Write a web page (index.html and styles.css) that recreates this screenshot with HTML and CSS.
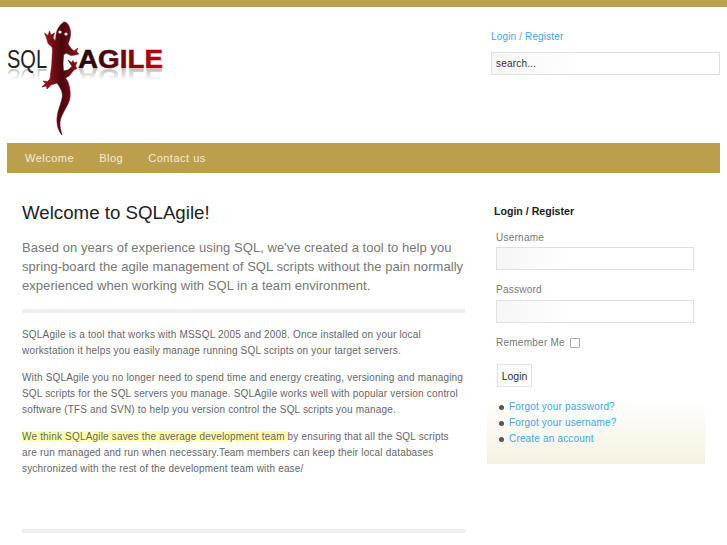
FILE: index.html
```html
<!DOCTYPE html>
<html lang="en">
<head>
<meta charset="utf-8">
<title>SQLAgile</title>
<link rel="stylesheet" href="styles.css">
</head>
<body>
<div class="topbar"></div>
<div class="wrap">
  <header class="header">
    <svg class="logo" width="170" height="120" viewBox="0 20 170 120" role="img" aria-label="SQL Agile">
      <defs>
        <linearGradient id="ag" gradientUnits="userSpaceOnUse" x1="78" y1="0" x2="163" y2="0">
          <stop offset="0" stop-color="#1a0508"/>
          <stop offset="0.4" stop-color="#5a0612"/>
          <stop offset="1" stop-color="#c8040f"/>
        </linearGradient>
        <linearGradient id="liz" gradientUnits="userSpaceOnUse" x1="48" y1="0" x2="78" y2="0">
          <stop offset="0" stop-color="#8f111b"/>
          <stop offset="0.45" stop-color="#4a060e"/>
          <stop offset="1" stop-color="#8a101a"/>
        </linearGradient>
        <linearGradient id="fade" gradientUnits="userSpaceOnUse" x1="0" y1="68" x2="0" y2="80">
          <stop offset="0" stop-color="#fff" stop-opacity="0.5"/>
          <stop offset="1" stop-color="#fff" stop-opacity="0"/>
        </linearGradient>
        <mask id="rm"><rect x="0" y="68" width="170" height="14" fill="url(#fade)"/></mask>
      </defs>
      <g mask="url(#rm)" fill="#777">
        <text class="logo-sql" transform="translate(0 137) scale(1 -1)" x="7" y="68" textLength="40" lengthAdjust="spacingAndGlyphs">SQL</text>
        <text class="logo-agile" transform="translate(0 137) scale(1 -1)" x="78" y="68" textLength="85" lengthAdjust="spacingAndGlyphs">AGILE</text>
      </g>
      <text class="logo-sql" x="7" y="68" fill="#222" textLength="40" lengthAdjust="spacingAndGlyphs">SQL</text>
      <text class="logo-agile" x="78" y="68" fill="url(#ag)" stroke="url(#ag)" stroke-width="0.5" textLength="85" lengthAdjust="spacingAndGlyphs">AGILE</text>
      <path fill="url(#liz)" stroke="url(#liz)" stroke-width="0.6" stroke-linejoin="round" d="M65 22 C68 23 70 27 70.500 32 C71 37 69 41 68 44 L71.500 49 L74 51 L78 48 L76.500 51.500 L79 54 L75 55 L71 55.500 L66 53 L63.500 55 L63 64 L63.500 71 L68 70 L72 66.500 L68 60 L71.500 62.500 L73 60.500 L74 63 L77 62 L75.500 66 L77 68.500 L74 70 L69 76 L65.500 78 L68 82 C70 88 71 94 69.500 100 C67 108 61 114 60 122 C59.500 127 61 131 62 135 C58.500 131 56.500 125 57 118 C57.500 110 62 102 62.500 96 C62.500 90 59 86 57 83 L51 85 L47 89 L46.500 86 L42 87 L45.500 83.500 L43 81 L47.500 81.500 L50 79 C50.500 72 52 66 52 60 C52 54 53 50 52 47 L48 43.500 L46.500 38 L44.500 33 L48 35.500 L49.500 31 L51 35 L54.500 33 L53 38 L55.500 41 C56 36 56 31 59 27 C61 24 63 22 65 22 Z"/>
      <circle cx="60" cy="32" r="1.600" fill="#fff"/>
      <circle cx="66" cy="34" r="1.600" fill="#fff"/>
    </svg>
    <div class="header-side">
      <div class="login-link"><a href="#">Login</a> / <a href="#">Register</a></div>
      <input class="search" type="text" value="search...">
    </div>
  </header>
  <nav class="nav">
    <a href="#">Welcome</a>
    <a href="#">Blog</a>
    <a href="#">Contact us</a>
  </nav>
  <div class="content">
    <main class="main">
      <h1>Welcome to SQLAgile!</h1>
      <p class="lead">Based on years of experience using SQL, we've created a tool to help you spring-board the agile management of SQL scripts without the pain normally experienced when working with SQL in a team environment.</p>
      <div class="rule"></div>
      <p class="body-text">SQLAgile is a tool that works with MSSQL 2005 and 2008. Once installed on your local workstation it helps you easily manage running SQL scripts on your target servers.</p>
      <p class="body-text">With SQLAgile you no longer need to spend time and energy creating, versioning and managing SQL scripts for the SQL servers you manage. SQLAgile works well with popular version control software (TFS and SVN) to help you version control the SQL scripts you manage.</p>
      <p class="body-text"><span class="hl">We think SQLAgile saves the average development team </span>by ensuring that all the SQL scripts are run managed and run when necessary.Team members can keep their local databases sychronized with the rest of the development team with ease/</p>
      <div class="rule rule-end"></div>
    </main>
    <aside class="side">
      <h3>Login / Register</h3>
      <form class="form">
        <label class="lbl" for="u">Username</label>
        <input class="field" id="u" type="text">
        <label class="lbl" for="p">Password</label>
        <input class="field" id="p" type="password">
        <div class="remember"><label for="r">Remember Me</label><span class="check" id="r"></span></div>
        <button class="btn" type="button">Login</button>
      </form>
      <ul class="links">
        <li><a href="#">Forgot your password?</a></li>
        <li><a href="#">Forgot your username?</a></li>
        <li><a href="#">Create an account</a></li>
      </ul>
    </aside>
  </div>
</div>
</body>
</html>
```
FILE: styles.css
```css
html, body { margin: 0; padding: 0; background: #fff; }
body { font-family: "Liberation Sans", Arial, sans-serif; color: #666; font-size: 11px; height: 545px; overflow: hidden; }
a { color: #3ba7ea; text-decoration: none; }
.topbar { height: 7px; background: #bb9f4d; }
.wrap { padding: 0 7px; }
.header { height: 136px; display: flex; justify-content: space-between; }
.logo { margin: 13px 0 0 -7px; flex: none; }
.logo-sql { font: 400 25px "Liberation Sans", sans-serif; }
.logo-agile { font: 700 25px "Liberation Sans", sans-serif; }
.header-side { width: 229px; padding-top: 23px; }
.login-link { font-size: 10px; line-height: 13px; letter-spacing: 0.15px; color: #6aa; margin-bottom: 9px; }
.search { display: block; box-sizing: border-box; width: 229px; height: 23px; border: 1px solid #e0e0e0; padding: 0 4px; margin: 0; font: 10px "Liberation Sans", sans-serif; letter-spacing: 0.2px; color: #333; background: linear-gradient(100deg, #f6f6f6, #fff 40%); outline: 0; }
.nav { height: 30px; background: #bb9f4d; display: flex; align-items: center; gap: 25px; padding-left: 18px; font-size: 11px; letter-spacing: 0.5px; }
.nav a { color: #f3ecd6; }
.content { display: flex; padding-left: 15px; }
.main { width: 443px; flex: none; }
h1 { font-size: 18.700px; font-weight: 400; line-height: 24px; color: #222; margin: 28px 0 0; }
.lead { font-size: 13px; line-height: 19px; color: #777; margin: 13px 0 14px; letter-spacing: 0.05px; }
.rule { height: 4px; background: #eee; }
.body-text { font-size: 10px; line-height: 16px; color: #666; letter-spacing: 0.18px; margin: 0 0 11px; }
.rule + .body-text { margin-top: 14px; }
.hl { background: #ffffa8; }
.rule-end { margin-top: 52px; }
.side { width: 218px; margin-left: 22px; box-sizing: border-box; height: 291px; padding: 32px 0 0 7px; background: linear-gradient(to bottom, #fff 0, #fff 225px, #f6f1e1 100%); }
h3 { font-size: 10.600px; line-height: 13px; font-weight: 700; color: #222; margin: 0 0 13px; }
.form { padding-left: 2px; }
.lbl { display: block; font-size: 10px; line-height: 13px; letter-spacing: 0.25px; color: #777; margin-bottom: 3px; }
.field + .lbl { margin-bottom: 4px; }
.field { display: block; box-sizing: border-box; width: 198px; height: 23px; border: 1px solid #e0e0e0; margin: 0 0 13px; padding: 0; background: linear-gradient(100deg, #f6f6f6, #fff 40%); outline: 0; }
.remember { display: flex; align-items: center; gap: 5px; font-size: 10px; line-height: 13px; letter-spacing: 0.25px; color: #777; }
.check { width: 8px; height: 8px; border: 1px solid #aaa; border-radius: 1px; }
.btn { display: block; box-sizing: border-box; margin: 15px 0 0 1px; width: 35px; height: 23px; padding: 0; background: #fcfcfc; border: 1px solid #e2e2e2; font: 10.500px "Liberation Sans", sans-serif; color: #333; }
.links { list-style: none; margin: 12px 0 0; padding: 0 0 0 15px; }
.links li { position: relative; font-size: 10px; line-height: 16px; letter-spacing: 0.17px; }
.links li::before { content: ""; position: absolute; left: -10px; top: 6px; width: 5px; height: 5px; border-radius: 50%; background: #555; }
```
